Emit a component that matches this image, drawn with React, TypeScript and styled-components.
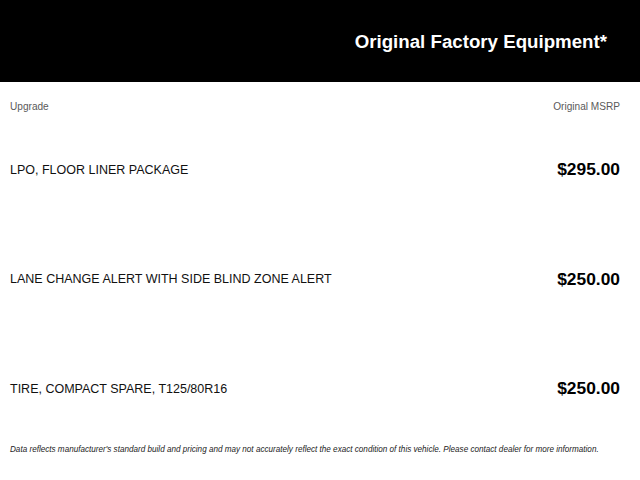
import React from 'react';
import styled, { createGlobalStyle } from 'styled-components';

const GlobalStyle = createGlobalStyle`
  html, body {
    margin: 0;
    padding: 0;
    background: #ffffff;
    font-family: "Liberation Sans", Arial, sans-serif;
  }
`

interface Upgrade {
  name: string;
  price: string;
}

const upgrades: Upgrade[] = [
  { name: 'LPO, FLOOR LINER PACKAGE', price: '$295.00' },
  { name: 'LANE CHANGE ALERT WITH SIDE BLIND ZONE ALERT', price: '$250.00' },
  { name: 'TIRE, COMPACT SPARE, T125/80R16', price: '$250.00' },
];

const Page = styled.div`
  width: 640px;
  height: 480px;
  display: flex;
  flex-direction: column;
  overflow: hidden;
`

const Header = styled.header`
  height: 82px;
  background: #000000;
  display: flex;
  justify-content: flex-end;
  align-items: center;
  padding: 2px 33px 0 0;
  box-sizing: border-box;
`

const Title = styled.h1`
  margin: 0;
  color: #ffffff;
  font-size: 18.7px;
  font-weight: 700;
  line-height: 22px;
`

const Body = styled.div`
  display: flex;
  flex-direction: column;
  padding: 18px 20px 0 10px;
`

const Labels = styled.div`
  display: flex;
  justify-content: space-between;
  height: 15px;
`

const Label = styled.span`
  font-size: 10.1px;
  line-height: 14px;
  color: #5a5a5a;
`

const Row = styled.div`
  height: 109.5px;
  display: flex;
  justify-content: space-between;
  align-items: center;
`

const ItemName = styled.span`
  font-size: 12.5px;
  color: #111111;
`

const Price = styled.span`
  font-size: 17.4px;
  font-weight: 700;
  color: #000000;
`

const Note = styled.p`
  margin: 0;
  padding: 0 10px;
  font-size: 8.13px;
  line-height: 12px;
  font-style: italic;
  color: #222222;
`

export default function App() {
  return (
    <>
      <GlobalStyle />
      <Page>
        <Header>
          <Title>Original Factory Equipment*</Title>
        </Header>
        <Body>
          <Labels>
            <Label>Upgrade</Label>
            <Label>Original MSRP</Label>
          </Labels>
          {upgrades.map((u) => (
            <Row key={u.name}>
              <ItemName>{u.name}</ItemName>
              <Price>{u.price}</Price>
            </Row>
          ))}
        </Body>
        <Note>
          Data reflects manufacturer's standard build and pricing and may not accurately reflect the exact condition of this vehicle. Please contact dealer for more information.
        </Note>
      </Page>
    </>
  )
}
